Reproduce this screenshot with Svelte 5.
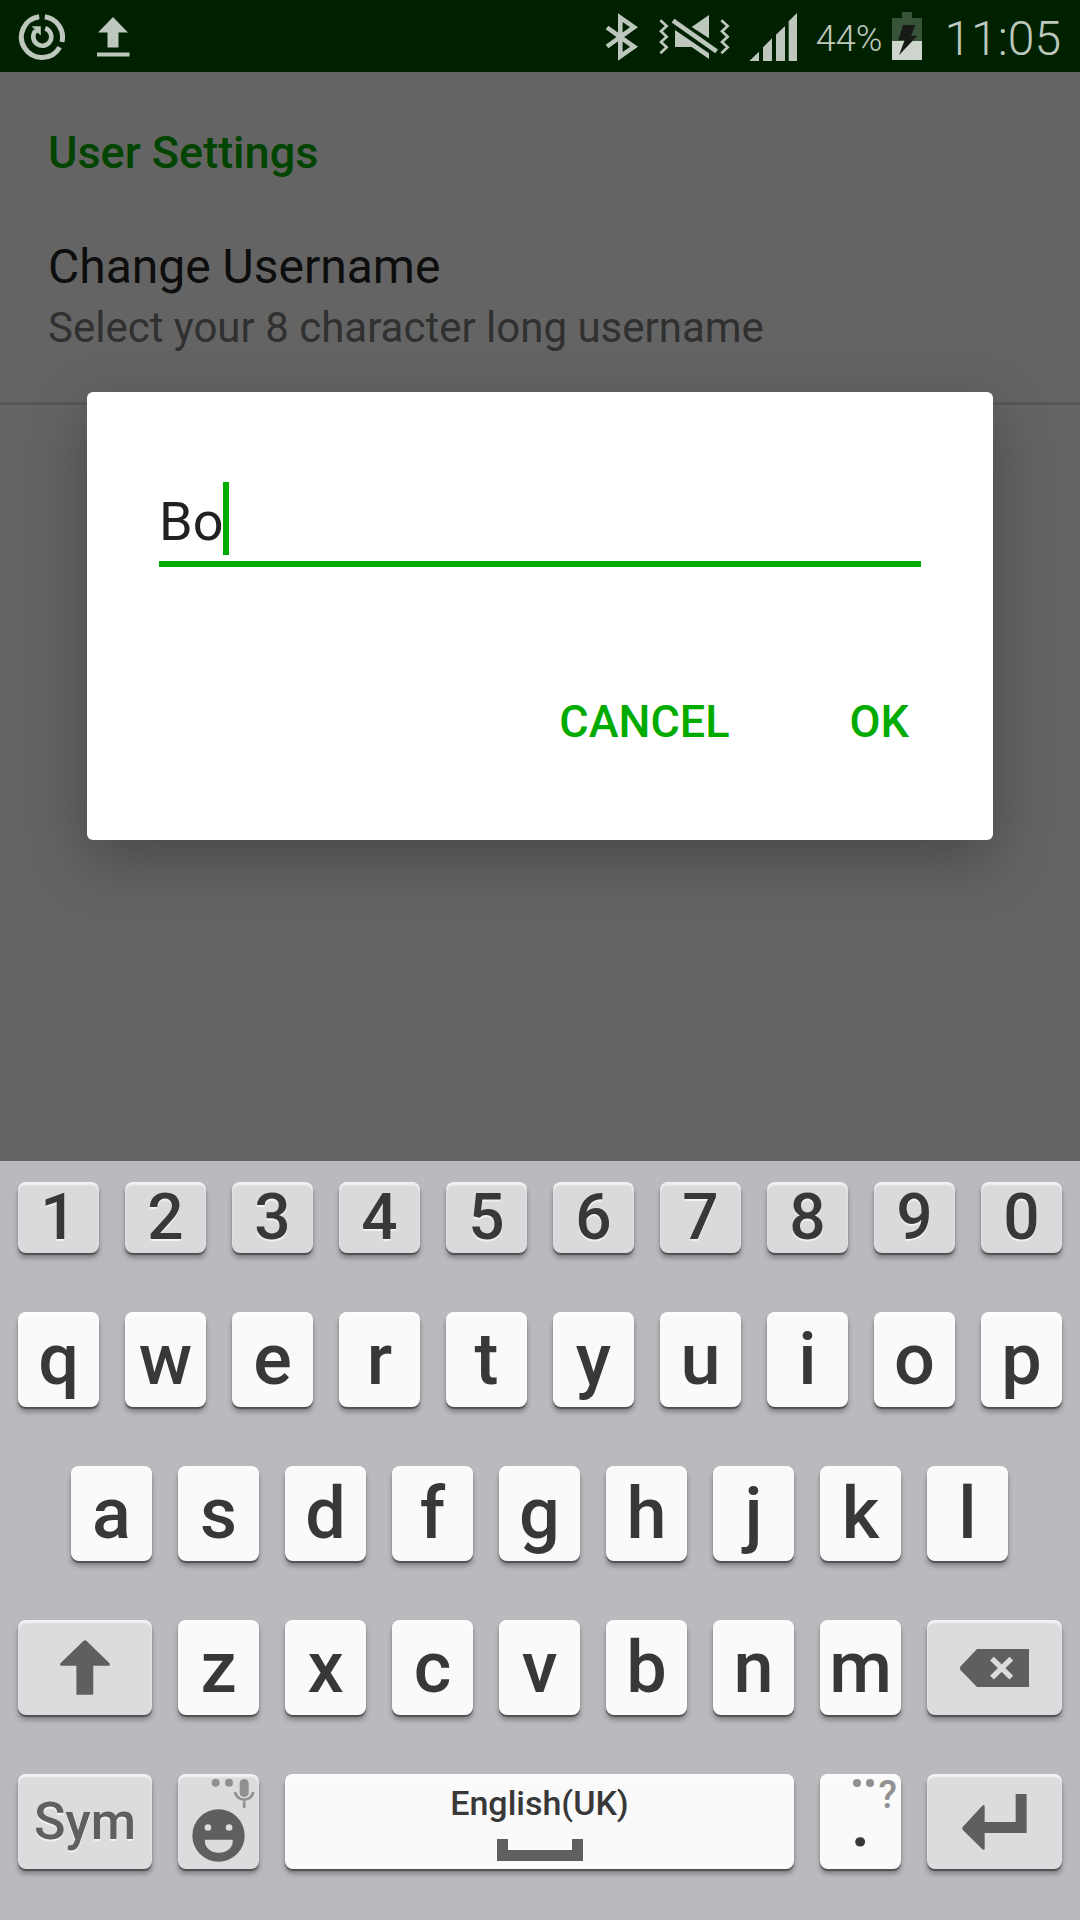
<script lang="ts">
  const digits = [...'1234567890'];
  const topLetters = [...'qwertyuiop'];
  const homeLetters = [...'asdfghjkl'];
  const lowLetters = [...'zxcvbnm'];
  let username = $state('Bo');
</script>

<div class="screen">
  <header class="status">
    <svg class="ring" viewBox="0 0 48 48" width="48" height="48" aria-hidden="true">
      <path d="M26.8 3.7A20.5 20.5 0 0 1 43.9 29M41.7 34.2A20.5 20.5 0 1 1 21.2 3.7" fill="none" stroke="currentColor" stroke-width="5" />
      <path d="M27.2 15.2A9 9 0 1 1 17.5 17.8" fill="none" stroke="currentColor" stroke-width="4.6" />
      <path d="M13.5 13.2H22.8V22.6L19.8 19.8 16 20.5 17 16.6z" fill="currentColor" />
    </svg>
    <svg viewBox="0 0 34 40" width="34" height="40" aria-hidden="true">
      <path d="M17 0L32 15.5H22.5V30.5H11.5V15.5H2zM1 35.5H33.5V39.5H1z" fill="currentColor" />
    </svg>
    <div class="tray">
      <svg viewBox="0 0 36 50" width="36" height="50" aria-hidden="true">
        <path d="M3 15.5L30 34.8 16.3 44.4V5.6L30 15.2 3 34.5" fill="none" stroke="currentColor" stroke-width="4.6" stroke-miterlimit="10" />
      </svg>
      <svg viewBox="234 36 216 150" width="72" height="50" aria-hidden="true">
        <path d="M241 61L260 78 243 94 260 110 243 126 260 142 241 160M424 61L443 78 426 94 443 110 426 126 443 142 424 160" fill="none" stroke="currentColor" stroke-width="8" />
        <path d="M279 62L410 154" stroke="currentColor" stroke-width="14" />
        <path d="M387 45V115L335 81zM285 90L387 160V177L335 141H285z" fill="currentColor" />
      </svg>
      <svg viewBox="510 36 150 150" width="50" height="50" aria-hidden="true">
        <path d="M514 183L543 155V183zM555 183V142L582 115V183zM594 183V104L621 78V183zM632 183V64L657 39V183z" fill="currentColor" />
      </svg>
      <span class="percent">44%</span>
      <svg viewBox="219 36 90 150" width="30" height="50" aria-hidden="true">
        <path d="M249 36H279V54H309V124H219V54H249z" fill="#385438" />
        <path d="M219 123H309V180H219z" fill="#cdd5cd" />
        <path d="M252 75H289L276 107H295L240 166 257 120H238z" fill="#181a18" />
      </svg>
      <time class="clock">11:05</time>
    </div>
  </header>

  <main>
    <section class="settings">
      <h1>User Settings</h1>
      <button class="item">
        <span class="title">Change Username</span>
        <span class="summary">Select your 8 character long username</span>
      </button>
    </section>

    <div class="overlay">
      <form class="dialog" onsubmit={(e) => e.preventDefault()}>
        <div class="field">
          <input type="text" aria-label="Username" maxlength="8" spellcheck="false" autocomplete="off" bind:value={username} />
          <span class="caret"></span>
        </div>
        <div class="actions">
          <button type="button">CANCEL</button>
          <button type="submit">OK</button>
        </div>
      </form>
    </div>
  </main>

  <section class="keyboard" aria-label="Keyboard">
    <div class="row">
      {#each digits as d}<button class="key digit">{d}</button>{/each}
    </div>
    <div class="row">
      {#each topLetters as c}<button class="key">{c}</button>{/each}
    </div>
    <div class="row home">
      {#each homeLetters as c}<button class="key">{c}</button>{/each}
    </div>
    <div class="row">
      <button class="key fn wide" aria-label="Shift">
        <svg viewBox="179 120 150 166" width="50" height="55">
          <path d="M249 123Q254 119 259 123L328 190Q331 197 325 198H279V285H228V198H183Q177 197 180 190z" fill="currentColor" />
        </svg>
      </button>
      {#each lowLetters as c}<button class="key">{c}</button>{/each}
      <button class="key fn fill" aria-label="Backspace">
        <svg viewBox="714 147 216 114" width="72" height="38">
          <path d="M768 147H924V261H768L719 211Q715 205 719 199z" fill="currentColor" />
          <path d="M813 176L871 233M871 176L813 233" stroke="#dbdcde" stroke-width="16" />
        </svg>
      </button>
    </div>
    <div class="row">
      <button class="key fn wide sym">Sym</button>
      <button class="key fn emoji" aria-label="Emoji">
        <span class="hint">
          <svg viewBox="634 534 132 93" width="44" height="31">
            <circle cx="648" cy="548" r="12" fill="currentColor" />
            <circle cx="688" cy="548" r="12" fill="currentColor" />
            <rect x="720" y="537" width="27" height="54" rx="13" fill="currentColor" />
            <path d="M706 576A28 28 0 0 0 761 576M733.500 604V624" fill="none" stroke="currentColor" stroke-width="8" />
          </svg>
        </span>
        <svg viewBox="0 0 160 160" width="53" height="53">
          <circle cx="80" cy="80" r="79" fill="currentColor" />
          <circle cx="48" cy="56" r="10" fill="#dbdcde" />
          <circle cx="112" cy="56" r="10" fill="#dbdcde" />
          <path d="M39 93H123V98A42 34 0 0 1 39 98z" fill="#dbdcde" />
        </svg>
      </button>
      <button class="key fill space">
        <span>English(UK)</span>
        <svg viewBox="0 0 86 22" width="86" height="22" aria-hidden="true">
          <path d="M0 0H11V11H75V0H86V22H0z" fill="#5f5f5f" />
        </svg>
      </button>
      <button class="key">
        <span class="hint">
          <svg viewBox="0 0 22 31" width="22" height="31" aria-hidden="true">
            <circle cx="4" cy="5" r="4" fill="currentColor" />
            <circle cx="17" cy="5" r="4" fill="currentColor" />
          </svg>
          <span>?</span>
        </span>
        .
      </button>
      <button class="key fn wide enter" aria-label="Enter">
        <svg viewBox="721 582 204 168" width="68" height="56">
          <path d="M885 582H918V699H792V747Q789 751 785 748L726 689Q723 685 726 681L785 617Q789 613 792 617V666H885z" fill="currentColor" />
        </svg>
      </button>
    </div>
  </section>
</div>

<style>
  :global(body) {
    margin: 0;
    background: #646464;
  }
  .screen {
    display: flex;
    flex-direction: column;
    min-height: 100vh;
    font-family: Roboto, sans-serif;
  }
  button {
    margin: 0;
    padding: 0;
    border: 0;
    background: none;
    font: inherit;
    color: inherit;
  }
  svg {
    display: block;
    flex: none;
  }

  .status {
    display: flex;
    align-items: center;
    gap: 30px;
    box-sizing: border-box;
    height: 72px;
    padding: 2px 19px 0 18px;
    background: #002100;
    color: #bdc7bd;
  }
  .tray {
    display: flex;
    align-items: center;
    gap: 18px;
    margin-left: auto;
  }
  .percent {
    margin-right: -8px;
    padding-top: 4px;
    font-size: 36px;
    line-height: 42px;
    font-weight: 350;
  }
  .clock {
    margin-left: 4px;
    padding-top: 4px;
    font-size: 48px;
    line-height: 56px;
    font-weight: 350;
  }

  main {
    position: relative;
    display: flex;
    flex-direction: column;
    flex: 1;
    background: #646464;
  }
  .settings {
    display: flex;
    flex-direction: column;
    padding-top: 54px;
  }
  h1 {
    margin: 0;
    padding: 0 48px;
    font-size: 45px;
    line-height: 53px;
    font-weight: 500;
    color: #004400;
  }
  .item {
    display: flex;
    flex-direction: column;
    gap: 8px;
    padding: 60px 48px 49px;
    border-bottom: 3px solid #575757;
    text-align: left;
  }
  .title {
    font-size: 48px;
    line-height: 56px;
    color: #0d0d0d;
  }
  .summary {
    font-size: 42px;
    line-height: 50px;
    color: #303030;
  }

  .overlay {
    position: absolute;
    inset: 0;
    display: flex;
    flex-direction: column;
    justify-content: center;
    padding: 0 87px 1px;
  }
  .dialog {
    padding: 90px 72px 92px;
    border-radius: 6px;
    background: #fff;
    box-shadow: 0 20px 60px rgba(0, 0, 0, 0.28);
  }
  .field {
    position: relative;
    display: flex;
    border-bottom: 6px solid #00ab00;
  }
  input {
    flex: 1;
    min-width: 0;
    height: 79px;
    padding: 0;
    border: 0;
    outline: 0;
    background: none;
    font: 54px Roboto, sans-serif;
    color: #212121;
    caret-color: transparent;
  }
  .caret {
    position: absolute;
    top: 0;
    left: 64px;
    width: 6px;
    height: 73px;
    background: #00ab00;
  }
  .actions {
    display: flex;
    justify-content: flex-end;
    gap: 120px;
    padding: 128px 12px 0;
    font-size: 45px;
    line-height: 53px;
    font-weight: 500;
    color: #00ab00;
  }

  .keyboard {
    --key: calc((100% - 234px) / 10);
    display: flex;
    flex-direction: column;
    gap: 59px;
    padding: 21px 18px 51px;
    background: #b9babe;
  }
  .row {
    display: flex;
    gap: 26px;
  }
  .home {
    padding-left: round(down, calc(var(--key) / 2 + 13px), 1px);
    padding-right: round(up, calc(var(--key) / 2 + 13px), 1px);
  }
  .key {
    position: relative;
    display: flex;
    align-items: center;
    justify-content: center;
    box-sizing: border-box;
    flex: 0 0 var(--key);
    height: 95px;
    border-radius: 8px;
    background: #fafafa;
    box-shadow:
      inset 0 3px 2px rgba(255, 255, 255, 0.65),
      0 2px 1px rgba(0, 0, 0, 0.4),
      0 5px 5px rgba(0, 0, 0, 0.3);
    font-size: 72px;
    line-height: 84px;
    font-weight: 500;
    color: #383838;
  }
  .home .key {
    flex-basis: calc((100% - 208px) / 9);
  }
  .digit {
    height: 71px;
    background: #d9dadc;
    font-size: 64px;
    text-shadow: 0 2px 1px #f2f2f2;
  }
  .fn {
    background: #dbdcde;
    color: #5f5f5f;
  }
  .wide {
    flex-basis: round(down, calc(var(--key) * 3 / 2 + 13px), 1px);
  }
  .enter {
    flex-basis: round(up, calc(var(--key) * 3 / 2 + 13px), 1px);
  }
  .fill {
    flex: 1;
  }
  .sym {
    font-size: 52px;
    text-shadow: 0 2px 1px #f2f2f2;
  }
  .emoji {
    padding-top: 28px;
  }
  .space {
    flex-direction: column;
    gap: 16px;
    font-size: 34px;
    line-height: 40px;
  }
  .hint {
    position: absolute;
    top: 4px;
    right: 4px;
    display: flex;
    gap: 4px;
    font-size: 38px;
    line-height: 34px;
    color: #909090;
  }
</style>
